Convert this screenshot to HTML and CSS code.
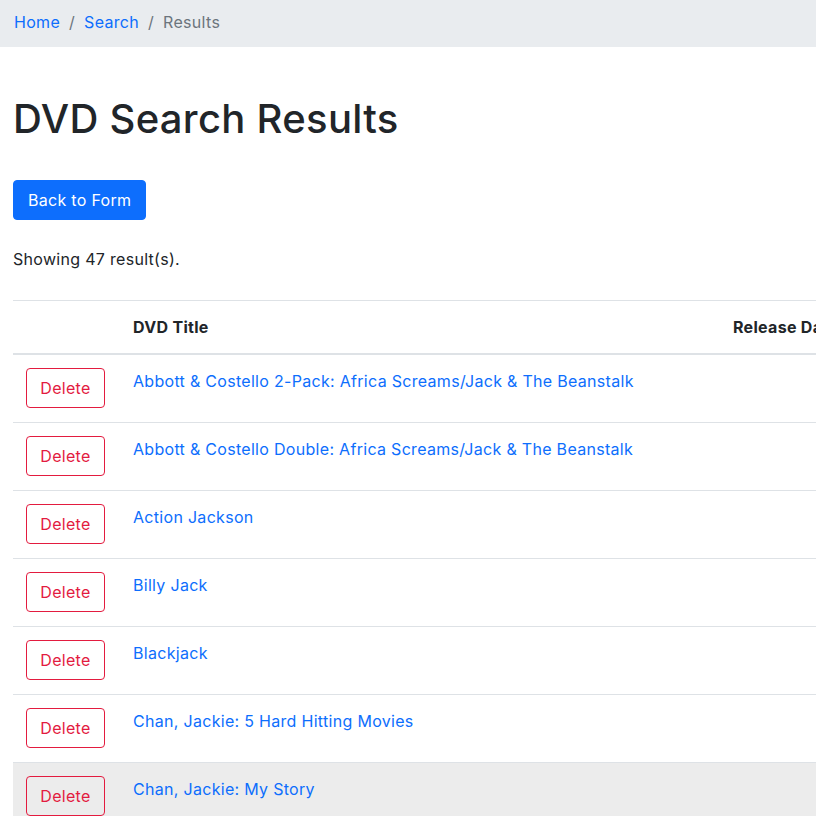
FILE: index.html
```html
<!DOCTYPE html>
<html lang="en">
<head>
<meta charset="utf-8">
<title>DVD Search Results</title>
<link rel="stylesheet" href="styles.css">
</head>
<body>
<nav class="breadcrumb">
  <a href="#" class="crumb">Home</a>
  <span class="sep">/</span>
  <a href="#" class="crumb">Search</a>
  <span class="sep">/</span>
  <span class="crumb active">Results</span>
</nav>
<main class="page">
  <h1 class="title">DVD Search Results</h1>
  <a href="#" class="btn-primary">Back to Form</a>
  <p class="count">Showing 47 result(s).</p>
  <table class="results">
    <thead>
      <tr>
        <th class="col-action"></th>
        <th class="col-title">DVD Title</th>
        <th class="col-date">Release Date</th>
      </tr>
    </thead>
    <tbody>
      <tr><td><button class="btn-delete">Delete</button></td><td><a href="#">Abbott &amp; Costello 2-Pack: Africa Screams/Jack &amp; The Beanstalk</a></td><td></td></tr>
      <tr><td><button class="btn-delete">Delete</button></td><td><a href="#">Abbott &amp; Costello Double: Africa Screams/Jack &amp; The Beanstalk</a></td><td></td></tr>
      <tr><td><button class="btn-delete">Delete</button></td><td><a href="#">Action Jackson</a></td><td></td></tr>
      <tr><td><button class="btn-delete">Delete</button></td><td><a href="#">Billy Jack</a></td><td></td></tr>
      <tr><td><button class="btn-delete">Delete</button></td><td><a href="#">Blackjack</a></td><td></td></tr>
      <tr><td><button class="btn-delete">Delete</button></td><td><a href="#">Chan, Jackie: 5 Hard Hitting Movies</a></td><td></td></tr>
      <tr class="hover"><td><button class="btn-delete">Delete</button></td><td><a href="#">Chan, Jackie: My Story</a></td><td></td></tr>
    </tbody>
  </table>
</main>
</body>
</html>
```
FILE: styles.css
```css
html, body {
  margin: 0;
  padding: 0;
  overflow: hidden;
}
body {
  font-family: Inter, "Liberation Sans", sans-serif;
  font-size: 16px;
  line-height: 24px;
  letter-spacing: 0.3px;
  color: #212529;
  background: #fff;
  width: 1100px;
}
a {
  color: #0d6efd;
  text-decoration: none;
}
.breadcrumb {
  display: flex;
  align-items: center;
  height: 47px;
  padding: 0 14px 3px;
  background: #e9ecef;
  box-sizing: border-box;
}
.sep {
  color: #6c757d;
  padding: 0 9px;
}
.crumb.active {
  color: #6c757d;
}
.page {
  padding: 0 13px;
}
.title {
  margin: 48px 0 0;
  font-size: 40px;
  line-height: 48px;
  font-weight: 500;
  letter-spacing: 0.3px;
}
.btn-primary {
  display: inline-block;
  margin-top: 37px;
  height: 40px;
  box-sizing: border-box;
  padding: 7px 14px;
  border: 1px solid #0d6efd;
  border-radius: 4px;
  background: #0d6efd;
  color: #fff;
  font-size: 16px;
  line-height: 24px;
}
.count {
  margin: 27px 0 0;
}
.results {
  margin-top: 29px;
  width: 1050px;
  border-collapse: collapse;
  border-top: 1px solid #dee2e6;
}
.results th {
  text-align: left;
  font-weight: 700;
  padding: 14px 14px 14px 13px;
  height: 24px;
  border-bottom: 2px solid #dee2e6;
  vertical-align: bottom;
}
.col-action { width: 80px; }
.col-title { width: 573px; }
.results td {
  padding: 14px 14px 13px 13px;
  border-bottom: 1px solid #dee2e6;
  vertical-align: top;
}
.results tr.hover td {
  background: #ececec;
}
.btn-delete {
  display: block;
  height: 40px;
  width: 79px;
  margin: -1px 0 1px;
  padding: 0;
  border: 1px solid #e31b3f;
  border-radius: 4px;
  background: transparent;
  color: #e31b3f;
  font-family: inherit;
  font-size: 16px;
  line-height: 24px;
  letter-spacing: 0.3px;
}
```
